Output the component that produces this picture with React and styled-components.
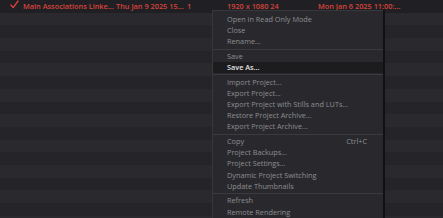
import React from "react";
import styled, { createGlobalStyle } from "styled-components";

const Global = createGlobalStyle`
  html, body { margin: 0; padding: 0; background: #252529; overflow: hidden; }
  body { font-family: "Open Sans", "Noto Sans", sans-serif; }
`;

const Page = styled.div`
  position: relative;
  width: 443px;
  height: 218px;
  overflow: hidden;
  background: #252529;
`;

const List = styled.div`
  display: flex;
  flex-direction: column;
`;

const Row = styled.div`
  height: 12.7px;
  flex: 0 0 12.7px;
  background: ${(p) => (p.$first ? "#202024" : p.$odd ? "#29292e" : "#252529")};
  display: grid;
  grid-template-columns: 13px 93px 71px 40px 91px 1fr;
  padding-left: 10px;
  align-items: center;
  color: #d8433b;
  font-size: 7.35px;
  font-weight: 600;
  white-space: nowrap;
`;

const Cell = styled.span`
  display: block;
  line-height: 12.7px;
  overflow: hidden;
`;

const Menu = styled.div`
  position: absolute;
  left: 212px;
  top: 10px;
  width: 171px;
  box-sizing: border-box;
  padding-top: 3px;
  background: #29292d;
  border: 1px solid #36363b;
  border-right: none;
  box-shadow: 2px 0 0 #111114;
  height: 230px;
`;

const Item = styled.div`
  height: 11.2px;
  line-height: 11.2px;
  display: flex;
  justify-content: space-between;
  padding: 0 16px 0 14px;
  font-size: 7.3px;
  color: ${(p) => (p.$active ? "#e2e2e2" : "#8d8d92")};
  background: ${(p) => (p.$active ? "#1c1c1f" : "transparent")};
  font-weight: ${(p) => (p.$active ? 600 : 400)};
  white-space: nowrap;
`;

const Separator = styled.div`
  height: 1px;
  margin: 1px 0 1.4px;
  background: #3a3a3f;
`;

const Check = () => (
  <svg width="9" height="9" viewBox="0 0 9 9">
    <path d="M1 5 L3.2 7.6 L8 1" fill="none" stroke="#d8433b" strokeWidth="1.3" strokeLinecap="round" strokeLinejoin="round" />
  </svg>
);

const groups = [
  ["Open in Read Only Mode", "Close", "Rename..."],
  ["Save", "Save As..."],
  ["Import Project...", "Export Project...", "Export Project with Stills and LUTs...", "Restore Project Archive...", "Export Project Archive..."],
  [["Copy", "Ctrl+C"], "Project Backups...", "Project Settings...", "Dynamic Project Switching", "Update Thumbnails"],
  ["Refresh", "Remote Rendering"],
];

export default function App() {
  const rows = Array.from({ length: 18 }, (_, i) => i);
  return (
    <Page>
      <Global />
      <List>
        {rows.map((i) =>
          i === 0 ? (
            <Row key={i} $first>
              <Cell><Check /></Cell>
              <Cell>Main Associations Linke...</Cell>
              <Cell>Thu Jan 9 2025 15...</Cell>
              <Cell>1</Cell>
              <Cell>1920 x 1080 24</Cell>
              <Cell>Mon Jan 6 2025 11:00:...</Cell>
            </Row>
          ) : (
            <Row key={i} $odd={i % 2 === 1} />
          )
        )}
      </List>
      <Menu>
        {groups.map((g, gi) => (
          <React.Fragment key={gi}>
            {gi > 0 && <Separator />}
            {g.map((it) => {
              const label = Array.isArray(it) ? it[0] : it;
              const sc = Array.isArray(it) ? it[1] : null;
              return (
                <Item key={label} $active={label === "Save As..."}>
                  <span>{label}</span>
                  {sc && <span>{sc}</span>}
                </Item>
              );
            })}
          </React.Fragment>
        ))}
      </Menu>
    </Page>
  );
}
